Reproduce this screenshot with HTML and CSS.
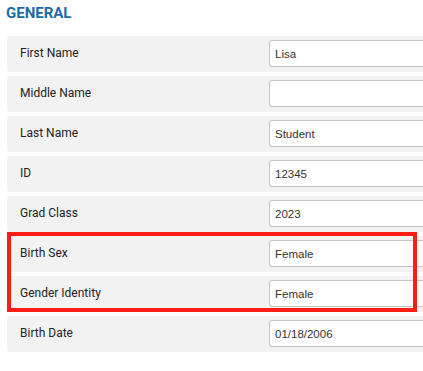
FILE: index.html
```html
<!DOCTYPE html>
<html lang="en">
  <head>
    <meta charset="UTF-8" />
    <meta name="viewport" content="width=device-width, initial-scale=1.0" />
    <title>General</title>
    <link rel="stylesheet" href="styles.css">
  </head>
  <body>
    <section class="panel">
      <h2 class="panel-title">GENERAL</h2>
      <div class="fields">
        <div class="field">
          <label class="field-label">First Name</label>
          <input class="field-input" type="text" value="Lisa" />
        </div>
        <div class="field">
          <label class="field-label">Middle Name</label>
          <input class="field-input" type="text" value="" />
        </div>
        <div class="field">
          <label class="field-label">Last Name</label>
          <input class="field-input" type="text" value="Student" />
        </div>
        <div class="field">
          <label class="field-label">ID</label>
          <input class="field-input" type="text" value="12345" />
        </div>
        <div class="field">
          <label class="field-label">Grad Class</label>
          <input class="field-input" type="text" value="2023" />
        </div>
        <div class="highlight-group">
          <div class="field">
            <label class="field-label">Birth Sex</label>
            <input class="field-input" type="text" value="Female" />
          </div>
          <div class="field">
            <label class="field-label">Gender Identity</label>
            <input class="field-input" type="text" value="Female" />
          </div>
          <div class="highlight"></div>
        </div>
        <div class="field">
          <label class="field-label">Birth Date</label>
          <input class="field-input" type="text" value="01/18/2006" />
        </div>
      </div>
    </section>
  </body>
</html>
```

FILE: styles.css
```css
* {
  box-sizing: border-box;
}

html,
body {
  margin: 0;
  padding: 0;
  background: #fff;
  overflow: hidden;
}

body {
  font-family: Roboto, "Liberation Sans", sans-serif;
  padding: 5px 0 0 7px;
}

.panel-title {
  margin: 0 0 14px -1px;
  font-size: 15px;
  font-weight: 700;
  line-height: 17px;
  color: #1c6ca6;
}

.fields {
  display: flex;
  flex-direction: column;
  gap: 4px;
  width: 470px;
}

.highlight-group {
  position: relative;
  display: flex;
  flex-direction: column;
  gap: 4px;
}

.highlight {
  position: absolute;
  left: 0;
  top: -4px;
  width: 410px;
  bottom: 0;
  border: 4.5px solid #fa1e14;
  pointer-events: none;
}

.field {
  display: flex;
  align-items: flex-start;
  height: 36px;
  padding: 4px 0 0 13px;
  background: #f2f2f2;
  border-radius: 4px;
}

.field-label {
  width: 249px;
  flex: none;
  padding-top: 6px;
  font-size: 12px;
  line-height: 15px;
  color: #222;
}

.field-input {
  width: 200px;
  height: 27px;
  margin: 0;
  padding: 0 5px;
  border: 1px solid #c4c4c4;
  border-radius: 3px;
  background: #fff;
  font-family: "Liberation Sans", Arial, sans-serif;
  font-size: 11.5px;
  color: #333;
  outline: none;
}
```
